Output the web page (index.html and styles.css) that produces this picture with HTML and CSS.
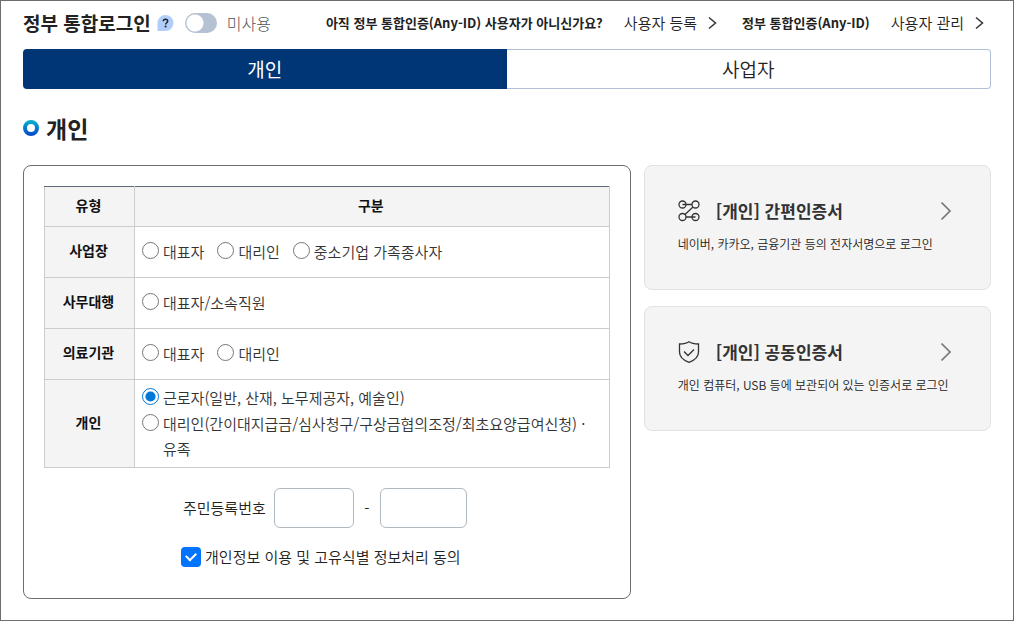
FILE: index.html
```html
<!DOCTYPE html>
<html lang="ko">
<head>
    <meta charset="UTF-8">
    <meta name="viewport" content="width=device-width, initial-scale=1">
    <title>정부 통합로그인</title>
    <link rel="stylesheet" href="styles.css">
</head>
<body>
    <header class="top">
        <h1 class="top-title">정부 통합로그인</h1>
        <button type="button" class="help" aria-label="도움말">
            <svg width="17" height="17" viewBox="0 0 17 17">
                <path d="M8.500 0a8 8 0 1 1 0 16H.5V8a8 8 0 0 1 8-8z" fill="#b1cefb"/>
                <path d="M6.300 6.200c.1-1.400 1-2 2.200-2s2.200.7 2.200 1.900c0 1.600-2.100 1.700-2.100 3.400" fill="none" stroke="#222" stroke-width="1.500"/>
                <circle cx="8.600" cy="11.600" r="1" fill="#222"/>
            </svg>
        </button>
        <label class="switch">
            <input type="checkbox" class="switch-input">
            <span>미사용</span>
        </label>
        <div class="top-links">
            <strong>아직 정부 통합인증(Any-ID) 사용자가 아니신가요?</strong>
            <a href="#" class="more">사용자 등록
                <svg width="9" height="14" viewBox="0 0 9 14"><path d="M1 1.500 7.500 7 1 12.500" fill="none" stroke="#333" stroke-width="1.500"/></svg>
            </a>
            <strong class="manage">정부 통합인증(Any-ID)</strong>
            <a href="#" class="more">사용자 관리
                <svg width="9" height="14" viewBox="0 0 9 14"><path d="M1 1.500 7.500 7 1 12.500" fill="none" stroke="#333" stroke-width="1.500"/></svg>
            </a>
        </div>
    </header>

    <nav class="tabs">
        <button type="button" class="tab active">개인</button>
        <button type="button" class="tab">사업자</button>
    </nav>

    <h2 class="section-title">
        <svg width="16" height="16" viewBox="0 0 16 16">
            <defs>
                <linearGradient id="ring" x1="0" y1="0" x2="0" y2="1">
                    <stop offset="0" stop-color="#06a9cc"/>
                    <stop offset="1" stop-color="#0650ca"/>
                </linearGradient>
            </defs>
            <circle cx="8" cy="8" r="6" fill="#fff" stroke="url(#ring)" stroke-width="4"/>
        </svg>
        개인
    </h2>

    <main class="content">
        <!-- Login form -->
        <form class="login">
            <table class="types">
                <thead>
                    <tr><th scope="col" class="type-col">유형</th><th scope="col">구분</th></tr>
                </thead>
                <tbody>
                    <tr>
                        <th scope="row">사업장</th>
                        <td>
                            <div class="options">
                                <label class="option"><input type="radio" name="type">대표자</label>
                                <label class="option"><input type="radio" name="type">대리인</label>
                                <label class="option"><input type="radio" name="type">중소기업 가족종사자</label>
                            </div>
                        </td>
                    </tr>
                    <tr>
                        <th scope="row">사무대행</th>
                        <td>
                            <div class="options">
                                <label class="option"><input type="radio" name="type">대표자/소속직원</label>
                            </div>
                        </td>
                    </tr>
                    <tr>
                        <th scope="row">의료기관</th>
                        <td>
                            <div class="options">
                                <label class="option"><input type="radio" name="type">대표자</label>
                                <label class="option"><input type="radio" name="type">대리인</label>
                            </div>
                        </td>
                    </tr>
                    <tr>
                        <th scope="row">개인</th>
                        <td>
                            <div class="options stacked">
                                <label class="option"><input type="radio" name="type" checked>근로자(일반, 산재, 노무제공자, 예술인)</label>
                                <label class="option"><input type="radio" name="type"><span>대리인(간이대지급금/심사청구/구상금협의조정/최초요양급여신청) · 유족</span></label>
                            </div>
                        </td>
                    </tr>
                </tbody>
            </table>
            <div class="number">
                <label for="num1">주민등록번호</label>
                <input type="text" id="num1" class="num-front" maxlength="6">
                <span class="dash">-</span>
                <input type="password" class="num-back" maxlength="7" aria-label="주민등록번호 뒷자리">
            </div>
            <label class="agree">
                <input type="checkbox" checked>
                개인정보 이용 및 고유식별 정보처리 동의
            </label>
        </form>

        <!-- Certificates -->
        <div class="cards">
            <a href="#" class="card">
                <span class="card-head">
                    <svg width="22" height="22" viewBox="0 0 22 22" fill="none" stroke="#333" stroke-width="1.300">
                        <circle cx="4.500" cy="4.500" r="3.500"/>
                        <circle cx="17.500" cy="4.500" r="3.500"/>
                        <circle cx="4.500" cy="17" r="3.500"/>
                        <circle cx="17.500" cy="17" r="3.500"/>
                        <path d="M4.500 4.500H14M15 7 7 14.500M8 17h9.500"/>
                    </svg>
                    <strong>[개인] 간편인증서</strong>
                    <svg class="arrow" width="12" height="20" viewBox="0 0 12 20"><path d="M1.500 1.500 10 10l-8.500 8.500" fill="none" stroke="#777" stroke-width="1.700"/></svg>
                </span>
                <span class="card-text">네이버, 카카오, 금융기관 등의 전자서명으로 로그인</span>
            </a>
            <a href="#" class="card">
                <span class="card-head">
                    <svg width="22" height="22" viewBox="0 0 22 22" fill="none" stroke="#333" stroke-width="1.300">
                        <path d="M11 .8C8.500 2.500 5 3 1.500 3v8c0 5 4.500 8.500 9.500 10.300C16 19.500 20.500 16 20.500 11V3C17 3 13.500 2.500 11 .8z"/>
                        <path d="m6 10.500 4 4 6-6"/>
                    </svg>
                    <strong>[개인] 공동인증서</strong>
                    <svg class="arrow" width="12" height="20" viewBox="0 0 12 20"><path d="M1.500 1.500 10 10l-8.500 8.500" fill="none" stroke="#777" stroke-width="1.700"/></svg>
                </span>
                <span class="card-text">개인 컴퓨터, USB 등에 보관되어 있는 인증서로 로그인</span>
            </a>
        </div>
    </main>
</body>
</html>
```

FILE: styles.css
```css
* {
    box-sizing: border-box;
}

body {
    margin: 0;
    min-height: 100vh;
    padding: 8px 22px 20px;
    border: 1px solid #6d6d6d;
    background: #fff;
    color: #222;
    font-family: "Noto Sans CJK KR", sans-serif;
    font-size: 15px;
    font-weight: 350;
    line-height: 24px;
    word-break: keep-all;
}

a {
    color: inherit;
    text-decoration: none;
}

button,
input {
    font: inherit;
}

strong {
    font-weight: 700;
}

svg {
    display: block;
    flex-shrink: 0;
}

/* Top line */
.top {
    display: flex;
    align-items: center;
    height: 28px;
    margin-bottom: 12px;
    white-space: nowrap;
}

.top-title {
    margin: 0;
    font-size: 19px;
}

.help {
    margin-left: 6px;
    padding: 0;
    border: 0;
    background: none;
}

.switch {
    display: flex;
    align-items: center;
    gap: 10px;
    margin-left: 11px;
    color: #555;
    font-size: 16px;
    font-weight: 300;
}

.switch-input {
    appearance: none;
    width: 32px;
    height: 20px;
    margin: 0;
    border-radius: 10px;
    background: radial-gradient(circle at 10px 10px, #fff 8px, #b4c2d3 9px);
}

.top-links {
    display: flex;
    align-items: center;
    gap: 21px;
    margin-left: auto;
    padding-right: 7px;
}

.top-links strong {
    font-size: 13px;
}

.top-links .manage {
    margin-left: 4px;
}

.more {
    display: flex;
    align-items: center;
    gap: 11px;
}

/* Tabs */
.tabs {
    display: flex;
    height: 40px;
}

.tab {
    flex: 1;
    padding: 0;
    border: 1px solid #b1c0d8;
    border-left: 0;
    border-radius: 0 4px 4px 0;
    background: #fff;
    color: #222;
    font-size: 19px;
}

.tab.active {
    border: 0;
    border-radius: 4px 0 0 4px;
    background: #003675;
    color: #fff;
    font-weight: 400;
}

.section-title {
    display: flex;
    align-items: center;
    gap: 7px;
    margin: 23px 0 21px;
    font-size: 23px;
    line-height: 32px;
}

.content {
    display: grid;
    grid-template-columns: 7fr 4fr;
    align-items: start;
    gap: 13px;
}

/* Login form */
.login {
    padding: 20px 20px 29px;
    border: 1px solid #6d6d6d;
    border-radius: 8px;
}

.types {
    width: 100%;
    border-collapse: collapse;
    color: #333;
    line-height: 25px;
}

.types th,
.types td {
    border: 1px solid #ccc;
}

.types th {
    height: 51px;
    padding: 0 2px 3px 0;
    background: #f4f4f4;
    color: #111;
    font-size: 14px;
}

.types thead th {
    height: 40px;
    border-top-color: #5f6b78;
}

.types .type-col {
    width: 90px;
}

.types td {
    padding: 5px 7px 6px;
}

.options {
    display: flex;
    gap: 13px;
}

.options.stacked {
    flex-direction: column;
    gap: 1px;
}

.option {
    display: flex;
    align-items: flex-start;
    gap: 4px;
}

.option input {
    flex-shrink: 0;
    width: 17px;
    height: 17px;
    margin: 3px 0;
    accent-color: #0078d7;
}

.number {
    display: flex;
    align-items: center;
    justify-content: center;
    margin-top: 20px;
    padding-right: 4px;
}

.number input {
    height: 40px;
    padding: 0 8px;
    border: 1px solid #b1b8be;
    border-radius: 6px;
}

.number .num-front {
    width: 80px;
    margin-left: 8px;
}

.number .num-back {
    width: 87px;
}

.dash {
    width: 26px;
    text-align: center;
}

.agree {
    display: flex;
    align-items: center;
    justify-content: center;
    gap: 4px;
    margin-top: 17px;
    padding-right: 12px;
}

.agree input {
    appearance: none;
    width: 20px;
    height: 20px;
    margin: 0;
    border-radius: 4px;
    background: #0073ff;
}

.agree input:checked::before {
    content: "";
    display: block;
    width: 8px;
    height: 5px;
    margin: 5px;
    border: solid #fff;
    border-width: 0 0 2px 2px;
    transform: rotate(-45deg);
}

/* Certificate cards */
.cards {
    display: flex;
    flex-direction: column;
    gap: 16px;
}

.card {
    display: flex;
    flex-direction: column;
    gap: 9px;
    min-height: 125px;
    padding: 33px;
    border: 1px solid #e2e2e2;
    border-radius: 8px;
    background: #f4f4f4;
}

.card-head {
    display: flex;
    align-items: center;
    gap: 16px;
    color: #333;
    font-size: 17px;
}

.arrow {
    margin-left: auto;
    margin-right: 5px;
}

.card-text {
    font-size: 12px;
}
```
